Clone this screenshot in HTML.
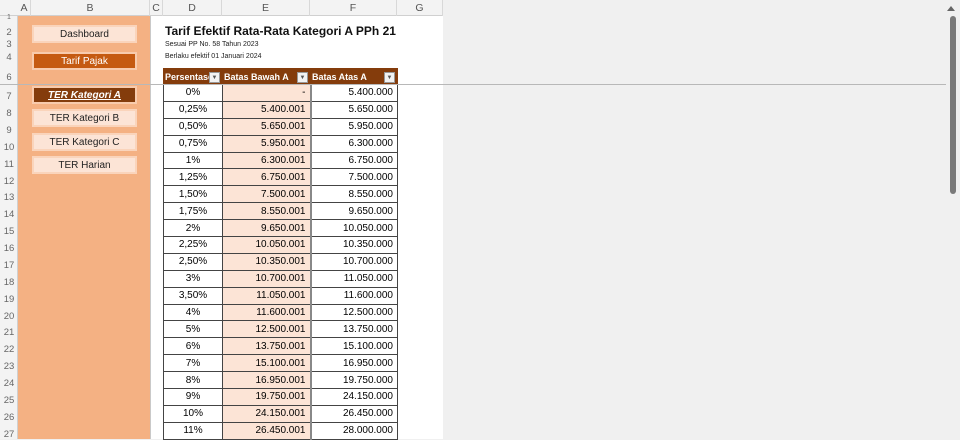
<!DOCTYPE html>
<html><head><meta charset="utf-8"><style>
*{margin:0;padding:0;box-sizing:border-box}
body{width:960px;height:439px;overflow:hidden;background:#f0f0f0;font-family:"Liberation Sans",sans-serif;position:relative}
.a{position:absolute}
.ch{top:0;height:16px;font-size:10.5px;color:#555;text-align:center;line-height:17px;border-right:1px solid #d8d8d8}
.rh{left:0;width:18px;font-size:9.5px;color:#666;text-align:center}
.btn{position:absolute;left:32px;width:105px;height:18px;font-size:10px;text-align:center;line-height:16px;border:2px solid #fad4bb;background:#fce4d6;color:#222}
table{position:absolute;left:163px;top:68px;border-collapse:collapse;font-size:10px}
td{height:16.9px;border:1px solid #444;padding:0 4px}
td.d{width:59px;text-align:center}
td.e{width:88px;text-align:right;background:#fce4d6;border-right:2px solid #888}
td.f{width:87px;text-align:right}
th{background:#843c0c;color:#fff;font-weight:bold;text-align:left;height:16px;padding:0 1px;position:relative;font-size:9px;border:1px solid #843c0c;white-space:nowrap;overflow:hidden}
th span{position:absolute;right:2px;top:3px;width:11px;height:11px;background:#f2f2f2;border:1px solid #999;font-size:6px;color:#555;text-align:center;line-height:10px}
</style></head><body>
<div class="a" style="left:0;top:0;width:443px;height:439px;background:#fff"></div>
<div class="a" style="left:0;top:0;width:443px;height:16px;background:#f3f3f3;border-bottom:1px solid #d0d0d0"></div>
<div class="a" style="left:0;top:16px;width:18px;height:423px;background:#f3f3f3;border-right:1px solid #d0d0d0"></div>
<div class="a ch" style="left:18px;width:13px">A</div>
<div class="a ch" style="left:31px;width:119px">B</div>
<div class="a ch" style="left:150px;width:13px">C</div>
<div class="a ch" style="left:163px;width:59px">D</div>
<div class="a ch" style="left:222px;width:88px">E</div>
<div class="a ch" style="left:310px;width:87px">F</div>
<div class="a ch" style="left:397px;width:46px">G</div>
<div class="a" style="left:18px;top:16px;width:132px;height:423px;background:#f4b183"></div>
<div class="a" style="left:150px;top:16px;width:1px;height:423px;background:#c9c9c9"></div>
<div class="a rh" style="top:14px;font-size:7px">1</div>
<div class="a rh" style="top:27px">2</div>
<div class="a rh" style="top:39px">3</div>
<div class="a rh" style="top:52px">4</div>
<div class="a rh" style="top:72px">6</div>
<div class="btn" style="top:25px">Dashboard</div>
<div class="btn" style="top:52px;background:#c55a11;color:#fff;border-color:#f8cbad">Tarif Pajak</div>
<div class="btn" style="top:86px;background:#843c0c;color:#fff;border-color:#f8cbad;font-weight:bold;font-style:italic;text-decoration:underline">TER Kategori A</div>
<div class="btn" style="top:109px">TER Kategori B</div>
<div class="btn" style="top:133px">TER Kategori C</div>
<div class="btn" style="top:156px">TER Harian</div>
<div class="a" style="left:165px;top:24px;font-size:12px;font-weight:bold;color:#111">Tarif Efektif Rata-Rata Kategori A PPh 21</div>
<div class="a" style="left:165px;top:41px;font-size:7px;color:#222">Sesuai PP No. 58 Tahun 2023</div>
<div class="a" style="left:165px;top:53px;font-size:7px;color:#222">Berlaku efektif 01 Januari 2024</div>
<table>
<tr><th>Persentase<span>▼</span></th><th>Batas Bawah A<span>▼</span></th><th>Batas Atas A<span>▼</span></th></tr>
<tr><td class="d">0%</td><td class="e">-</td><td class="f">5.400.000</td></tr>
<tr><td class="d">0,25%</td><td class="e">5.400.001</td><td class="f">5.650.000</td></tr>
<tr><td class="d">0,50%</td><td class="e">5.650.001</td><td class="f">5.950.000</td></tr>
<tr><td class="d">0,75%</td><td class="e">5.950.001</td><td class="f">6.300.000</td></tr>
<tr><td class="d">1%</td><td class="e">6.300.001</td><td class="f">6.750.000</td></tr>
<tr><td class="d">1,25%</td><td class="e">6.750.001</td><td class="f">7.500.000</td></tr>
<tr><td class="d">1,50%</td><td class="e">7.500.001</td><td class="f">8.550.000</td></tr>
<tr><td class="d">1,75%</td><td class="e">8.550.001</td><td class="f">9.650.000</td></tr>
<tr><td class="d">2%</td><td class="e">9.650.001</td><td class="f">10.050.000</td></tr>
<tr><td class="d">2,25%</td><td class="e">10.050.001</td><td class="f">10.350.000</td></tr>
<tr><td class="d">2,50%</td><td class="e">10.350.001</td><td class="f">10.700.000</td></tr>
<tr><td class="d">3%</td><td class="e">10.700.001</td><td class="f">11.050.000</td></tr>
<tr><td class="d">3,50%</td><td class="e">11.050.001</td><td class="f">11.600.000</td></tr>
<tr><td class="d">4%</td><td class="e">11.600.001</td><td class="f">12.500.000</td></tr>
<tr><td class="d">5%</td><td class="e">12.500.001</td><td class="f">13.750.000</td></tr>
<tr><td class="d">6%</td><td class="e">13.750.001</td><td class="f">15.100.000</td></tr>
<tr><td class="d">7%</td><td class="e">15.100.001</td><td class="f">16.950.000</td></tr>
<tr><td class="d">8%</td><td class="e">16.950.001</td><td class="f">19.750.000</td></tr>
<tr><td class="d">9%</td><td class="e">19.750.001</td><td class="f">24.150.000</td></tr>
<tr><td class="d">10%</td><td class="e">24.150.001</td><td class="f">26.450.000</td></tr>
<tr><td class="d">11%</td><td class="e">26.450.001</td><td class="f">28.000.000</td></tr>
</table>
<div class="a" style="left:0;top:84px;width:946px;height:1px;background:#b8b8b8"></div>
<div class="a rh" style="top:91px">7</div><div class="a rh" style="top:108px">8</div><div class="a rh" style="top:125px">9</div><div class="a rh" style="top:142px">10</div><div class="a rh" style="top:159px">11</div><div class="a rh" style="top:176px">12</div><div class="a rh" style="top:192px">13</div><div class="a rh" style="top:209px">14</div><div class="a rh" style="top:226px">15</div><div class="a rh" style="top:243px">16</div><div class="a rh" style="top:260px">17</div><div class="a rh" style="top:277px">18</div><div class="a rh" style="top:294px">19</div><div class="a rh" style="top:311px">20</div><div class="a rh" style="top:327px">21</div><div class="a rh" style="top:344px">22</div><div class="a rh" style="top:361px">23</div><div class="a rh" style="top:378px">24</div><div class="a rh" style="top:395px">25</div><div class="a rh" style="top:412px">26</div><div class="a rh" style="top:429px">27</div>
<div class="a" style="left:947px;top:6px;width:0;height:0;border-left:4px solid transparent;border-right:4px solid transparent;border-bottom:5px solid #666"></div>
<div class="a" style="left:950px;top:16px;width:6px;height:178px;background:#7a7a7a;border-radius:3px"></div>
</body></html>
